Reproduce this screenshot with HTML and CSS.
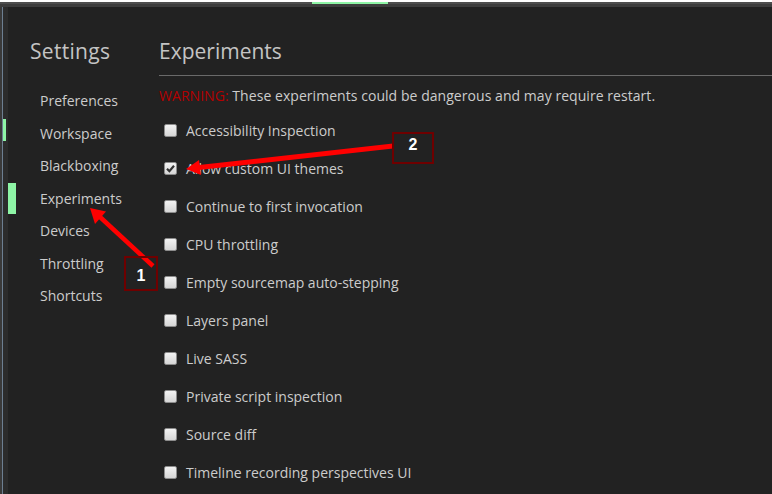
FILE: index.html
```html
<!DOCTYPE html>
<html lang="en">
<head>
    <meta charset="UTF-8">
    <title>Settings - Experiments</title>
    <link rel="stylesheet" href="styles.css">
</head>
<body>
    <div class="topbar">
        <div class="topbar-strip"></div>
        <div class="topbar-line"><span class="topbar-tab"></span></div>
    </div>

    <div class="main">
        <div class="edge">
            <span class="edge-mark"></span>
        </div>

        <div class="panel">
            <aside class="sidebar">
                <h1 class="title">Settings</h1>
                <nav class="nav">
                    <div class="nav-item">Preferences</div>
                    <div class="nav-item">Workspace</div>
                    <div class="nav-item">Blackboxing</div>
                    <div class="nav-item selected">Experiments</div>
                    <div class="nav-item">Devices</div>
                    <div class="nav-item">Throttling</div>
                    <div class="nav-item">Shortcuts</div>
                </nav>
            </aside>

            <section class="content">
                <h2 class="title">Experiments</h2>
                <div class="rule"></div>
                <p class="warning"><span class="warning-label">WARNING:</span> These experiments could be dangerous and may require restart.</p>

                <div class="experiments">
                    <label class="exp"><span class="box"></span>Accessibility Inspection</label>
                    <label class="exp"><span class="box checked"><svg viewBox="0 0 13 13" width="13" height="13"><path d="M3 6.8 L5.4 9.2 L10 3.8" fill="none" stroke="#333" stroke-width="2.2"/></svg></span>Allow custom UI themes</label>
                    <label class="exp"><span class="box"></span>Continue to first invocation</label>
                    <label class="exp"><span class="box"></span>CPU throttling</label>
                    <label class="exp"><span class="box"></span>Empty sourcemap auto-stepping</label>
                    <label class="exp"><span class="box"></span>Layers panel</label>
                    <label class="exp"><span class="box"></span>Live SASS</label>
                    <label class="exp"><span class="box"></span>Private script inspection</label>
                    <label class="exp"><span class="box"></span>Source diff</label>
                    <label class="exp"><span class="box"></span>Timeline recording perspectives UI</label>
                </div>
            </section>
        </div>
    </div>

    <!-- annotations drawn over the screenshot -->
    <svg class="arrows" width="772" height="494" viewBox="0 0 772 494">
        <line x1="153" y1="266" x2="100" y2="217" stroke="#ff0000" stroke-width="4.5"/>
        <polygon points="90,208 106,211.5 95,224" fill="#ff0000"/>
        <polygon points="393,143.5 393,148.5 199,170 199,165" fill="#ff0000"/>
        <polygon points="186,169 199,160 201,175" fill="#ff0000"/>
    </svg>
    <div class="marker marker-1">1</div>
    <div class="marker marker-2">2</div>
</body>
</html>
```

FILE: styles.css
```css
:root {
    --bg: #222222;
    --text: #cccccc;
    --green: #8ef5a6;
    --red: #ff0000;
    --dark-red: #6e0000;
}

* {
    margin: 0;
    padding: 0;
    box-sizing: border-box;
}

body {
    width: 772px;
    height: 494px;
    overflow: hidden;
    background: var(--bg);
    font-family: 'Open Sans', 'Noto Sans', sans-serif;
    color: var(--text);
    position: relative;
}

.topbar-strip {
    height: 2px;
    background: #ffffff;
}

.topbar-line {
    height: 5px;
    background: #3d3d3d;
    border-top: 2px solid #4e4e4e;
    padding-left: 312px;
}

.topbar-tab {
    display: block;
    width: 76px;
    height: 2px;
    margin-top: -2px;
    background: var(--green);
}

.main {
    display: flex;
    height: 487px;
}

.edge {
    width: 8px;
    background: #2c2c2c;
    border-left: 2px solid #3a3a3a;
    position: relative;
}

.edge::before {
    content: '';
    display: block;
    width: 1px;
    height: 100%;
    background: #6d7f92;
}

.edge-mark {
    position: absolute;
    left: 1px;
    top: 112px;
    width: 3px;
    height: 22px;
    background: var(--green);
}

.panel {
    flex: 1;
    display: flex;
    background: var(--bg);
}

.title {
    font-size: 21px;
    font-weight: 400;
    line-height: 28px;
    color: #c4c4c4;
    padding-top: 30px;
    height: 68px;
}

.sidebar {
    width: 151px;
}

.sidebar .title {
    padding-left: 22px;
    letter-spacing: 0.3px;
}

.nav {
    display: flex;
    flex-direction: column;
    padding-top: 10px;
}

.nav-item {
    font-size: 14px;
    height: 32.5px;
    line-height: 32px;
    padding-left: 32px;
    position: relative;
}

.nav-item.selected::before {
    content: '';
    position: absolute;
    left: 0;
    top: 0;
    width: 8px;
    height: 31px;
    background: var(--green);
}

.content {
    flex: 1;
}

.rule {
    height: 1px;
    background: #6a6a6a;
}

.warning {
    font-size: 14px;
    line-height: 20px;
    margin-top: 10px;
    letter-spacing: 0.05px;
}

.warning-label {
    color: #b30000;
}

.experiments {
    display: flex;
    flex-direction: column;
    padding-top: 5px;
    padding-left: 5px;
}

.exp {
    display: flex;
    align-items: center;
    gap: 9px;
    height: 38px;
    font-size: 14px;
}

.box {
    width: 13px;
    height: 13px;
    border-radius: 2px;
    border: 1px solid #8c8c8c;
    background: linear-gradient(#f2f2f2, #d6d6d6);
    display: flex;
    align-items: center;
    justify-content: center;
}

.box svg {
    display: block;
    margin: -1px;
}

.arrows {
    position: absolute;
    left: 0;
    top: 0;
}

.marker {
    position: absolute;
    border: 2px solid var(--dark-red);
    color: #ffffff;
    font-family: 'Liberation Sans', Arial, sans-serif;
    font-weight: 700;
    font-size: 16px;
    display: flex;
    align-items: center;
    justify-content: center;
}

.marker-1 {
    left: 124px;
    top: 256px;
    width: 34px;
    height: 35px;
    padding-top: 4px;
}

.marker-2 {
    left: 392px;
    top: 132px;
    width: 42px;
    height: 32px;
    padding-bottom: 6px;
}
```
